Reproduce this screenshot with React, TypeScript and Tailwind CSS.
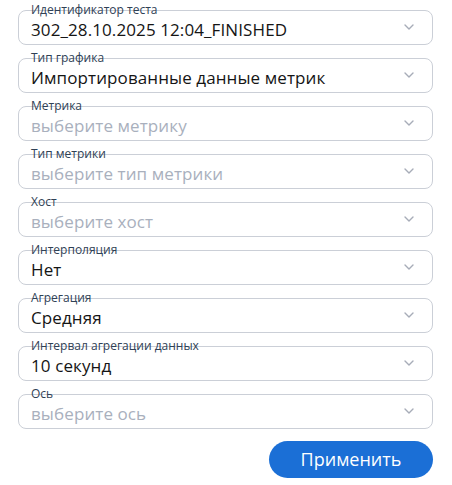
import React from "react";

const fields: { label: string; value: string; placeholder?: boolean }[] = [
  { label: "Идентификатор теста", value: "302_28.10.2025 12:04_FINISHED" },
  { label: "Тип графика", value: "Импортированные данные метрик" },
  { label: "Метрика", value: "выберите метрику", placeholder: true },
  { label: "Тип метрики", value: "выберите тип метрики", placeholder: true },
  { label: "Хост", value: "выберите хост", placeholder: true },
  { label: "Интерполяция", value: "Нет" },
  { label: "Агрегация", value: "Средняя" },
  { label: "Интервал агрегации данных", value: "10 секунд" },
  { label: "Ось", value: "выберите ось", placeholder: true },
];

function Chevron() {
  return (
    <svg width="10" height="6" viewBox="0 0 10 6" fill="none">
      <path d="M1 1l4 4 4-4" stroke="#a7acb8" strokeWidth="1.4" strokeLinecap="round" strokeLinejoin="round" />
    </svg>
  );
}

export default function App() {
  return (
    <div
      className="w-[452px] h-[485px] bg-white pl-[18px] pr-[19px] pt-[10px]"
      style={{ fontFamily: '"Open Sans", "Noto Sans", sans-serif' }}
    >
      <div className="flex flex-col gap-[13px]">
        {fields.map((f) => (
          <div key={f.label} className="relative h-[35px] rounded-[8px] border border-[#cbcfd7]">
            <span className="absolute left-[12px] top-[-7px] text-[12px] leading-none text-[#2f4155]">
              {f.label}
            </span>
            <div className="flex h-full items-center justify-between pl-[12px] pr-[18px] pt-[3px]">
              <span
                className={
                  "text-[17px] leading-none whitespace-nowrap tracking-[0.1px] " +
                  (f.placeholder ? "text-[#a9b0bd]" : "text-[#151515]")
                }
              >
                {f.value}
              </span>
              <span className="-mt-[4px]">
                <Chevron />
              </span>
            </div>
          </div>
        ))}
      </div>
      <div className="mt-[12px] flex justify-end">
        <button className="h-[37px] w-[164px] rounded-full bg-[#1b6fd6] text-[18px] font-medium text-white">
          Применить
        </button>
      </div>
    </div>
  );
}
